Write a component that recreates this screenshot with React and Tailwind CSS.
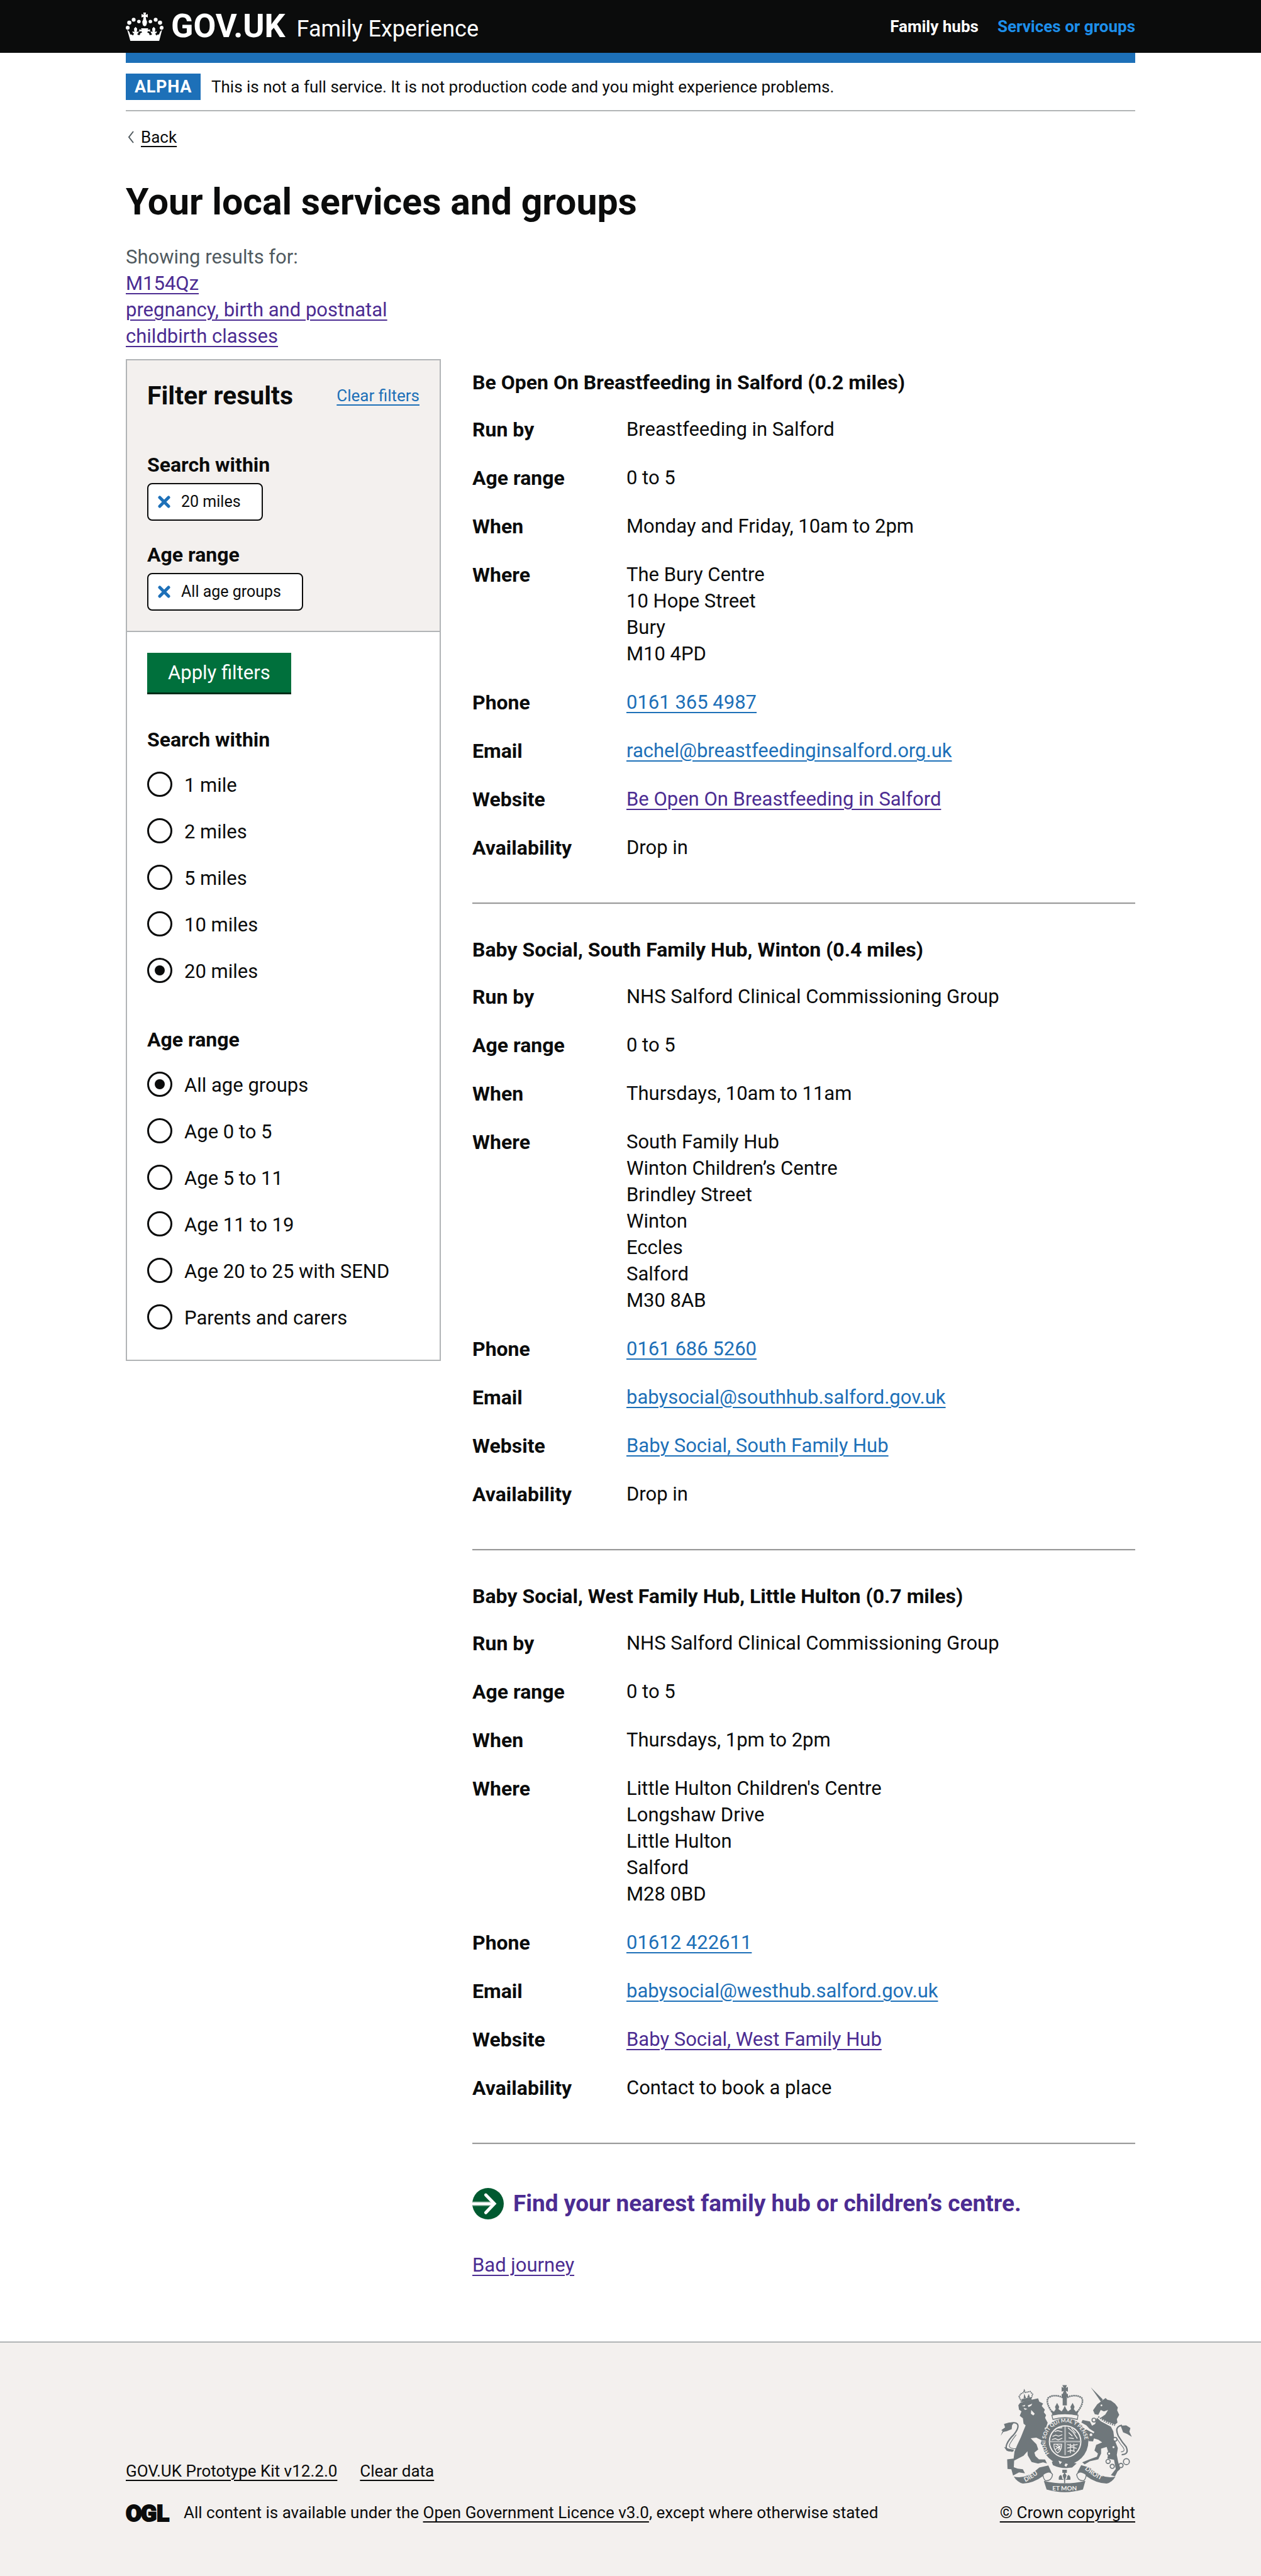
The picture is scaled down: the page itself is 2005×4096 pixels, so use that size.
import { useState } from "react";

const LINK = "text-[#1d70b8] underline decoration-2 underline-offset-[5px]";
const VISITED = "text-[#4c2c92] underline decoration-2 underline-offset-[5px]";
const DARK_LINK = "text-[#0b0c0c] underline decoration-2 underline-offset-[5px]";

const services = [
  {
    title: "Be Open On Breastfeeding in Salford (0.2 miles)",
    runBy: "Breastfeeding in Salford",
    age: "0 to 5",
    when: "Monday and Friday, 10am to 2pm",
    where: ["The Bury Centre", "10 Hope Street", "Bury", "M10 4PD"],
    phone: "0161 365 4987",
    email: "rachel@breastfeedinginsalford.org.uk",
    website: "Be Open On Breastfeeding in Salford",
    visited: true,
    availability: "Drop in",
  },
  {
    title: "Baby Social, South Family Hub, Winton (0.4 miles)",
    runBy: "NHS Salford Clinical Commissioning Group",
    age: "0 to 5",
    when: "Thursdays, 10am to 11am",
    where: [
      "South Family Hub",
      "Winton Children’s Centre",
      "Brindley Street",
      "Winton",
      "Eccles",
      "Salford",
      "M30 8AB",
    ],
    phone: "0161 686 5260",
    email: "babysocial@southhub.salford.gov.uk",
    website: "Baby Social, South Family Hub",
    visited: false,
    availability: "Drop in",
  },
  {
    title: "Baby Social, West Family Hub, Little Hulton (0.7 miles)",
    runBy: "NHS Salford Clinical Commissioning Group",
    age: "0 to 5",
    when: "Thursdays, 1pm to 2pm",
    where: ["Little Hulton Children's Centre", "Longshaw Drive", "Little Hulton", "Salford", "M28 0BD"],
    phone: "01612 422611",
    email: "babysocial@westhub.salford.gov.uk",
    website: "Baby Social, West Family Hub",
    visited: true,
    availability: "Contact to book a place",
  },
];

const distances = ["1 mile", "2 miles", "5 miles", "10 miles", "20 miles"];
const ages = [
  "All age groups",
  "Age 0 to 5",
  "Age 5 to 11",
  "Age 11 to 19",
  "Age 20 to 25 with SEND",
  "Parents and carers",
];

function Crown() {
  return (
    <svg viewBox="12 30 216 162" className="h-[45px] w-[60px]" fill="#fff" aria-hidden="true">
      <circle cx="23" cy="117" r="11" />
      <circle cx="32" cy="88" r="12" />
      <circle cx="57" cy="71" r="11" />
      <circle cx="87" cy="81" r="10" />
      <circle cx="217" cy="117" r="11" />
      <circle cx="208" cy="88" r="12" />
      <circle cx="183" cy="71" r="11" />
      <circle cx="153" cy="81" r="10" />
      <path d="M112 30h16l-3 13q8-2 13-5v20q-6-3-12-4l3 18q6 6 4 18l-4 14q-9 8-18 0l-4-14q-2-12 4-18l3-18q-6 1-12 4V38q5 3 13 5z" />
      <path d="M20 128q8 6 12 12l6 16q4-2 10 1l4 4 8-10q-12-4-9-14l10 5-2-20 9-10 9 10-2 20 10-5q2 11-8 15 6 10 16 6-2-12 12-14-4-8-4-8l-12 4v-14l14 2-4-8h42l-4 8 14-2v14l-12-4-4 8q14 2 12 14 10 4 16-6-10-4-8-15l10 5-2-20 9-10 9 10-2 20 10-5q3 10-9 14l8 10 4-4q6-3 10-1l6-16q4-6 12-12l-12 46-5 18H38l-5-18z" />
    </svg>
  );
}

function ArrowIcon() {
  return (
    <svg viewBox="30 17 180 180" className="size-[50px] shrink-0" aria-hidden="true">
      <circle cx="120" cy="107" r="90" fill="#005a30" />
      <path d="M31 95H140V120H31Z" fill="#9dbcac" />
      <path d="M30 101H150V114H30Z" fill="#fff" />
      <path d="M107 57L156 107L107 158" fill="none" stroke="#fff" strokeWidth="18" strokeLinecap="round" />
    </svg>
  );
}

function OglLogo() {
  return (
    <svg viewBox="0 0 69 28" className="mt-[3px] h-[28px] w-[69px] shrink-0 overflow-visible" role="img" aria-label="OGL">
      <text
        x="0 24 49"
        y="27"
        fontFamily="Roboto, sans-serif"
        fontWeight="900"
        fontSize="37"
        fill="#0b0c0c"
        stroke="#0b0c0c"
        strokeWidth="2"
      >
        OGL
      </text>
    </svg>
  );
}

function Supporters() {
  return (
    <g>
      {/* lion */}
      <path d="M232 235L242 222L270 212L345 195L352 214L374 225L366 240L384 260L378 275L391 292L385 307L400 335L392 360L382 366L396 402L404 440L398 472L375 470L360 455L366 436L335 421L303 424L318 440L336 458L346 488L324 506L330 526L350 545L385 546L396 568L374 562L345 569L308 560L286 522L282 470L288 494L262 524L208 552L206 590L228 598L258 602L270 625L236 620L202 638L192 602L170 600L168 545L205 540L210 500L226 462L246 420L260 385L274 350L262 340L258 310L240 295L250 270L236 260Z" />
      <path d="M204 496Q150 500 166 458Q178 430 205 405Q240 362 226 342Q212 328 178 342" fill="none" stroke="#6f777b" strokeWidth="8" />
      <path d="M218 484Q166 484 186 452Q200 428 220 404" fill="none" stroke="#6f777b" strokeWidth="4" />
      <path d="M131 410L142 382L134 378L156 362L150 342L178 334L208 332L196 350L194 372L166 384L146 388Z" />
      <path d="M150 474L176 484L208 490L198 502L166 496Z" />
      <path d="M250 214L236 186L246 170L262 162L266 150L272 162L300 156L314 172L304 202Z" fill="none" stroke="#6f777b" strokeWidth="7" strokeDasharray="7 3" />
      <path d="M250 200L308 188L306 204L252 216ZM262 196L266 168L276 194ZM282 192L292 170L298 190Z" />
      <g fill="#f3f0ee">
        <path d="M252 240L272 232L268 242ZM286 236L312 226L306 238L290 246ZM306 262L326 284L318 294L304 284ZM262 250L284 256L270 262Z" />
      </g>
      {/* unicorn */}
      <path d="M647 132L716 202L706 216Z" />
      <path d="M712 208L732 194L742 204L762 208L786 226L802 248L798 264L810 290L796 314L800 334L786 346L742 330L702 308L730 288L746 262L722 270L704 262L690 290L670 286L660 264L684 230Z" />
      <path d="M682 306L706 328L762 358L776 385L782 430L802 480L796 520L804 560L816 600L800 614L786 642L762 636L790 600L780 548L742 540L748 506L738 474L706 484L706 512L690 545L642 556L612 574L598 562L640 545L682 530L688 512L668 494L678 462L712 448L690 432L665 425L660 442L634 440L624 405L605 385L622 374L662 396L668 388L640 370L622 350L593 334L600 320L642 328L654 352L672 342Z" />
      <path d="M690 300Q730 336 786 350" fill="none" stroke="#6f777b" strokeWidth="8" strokeDasharray="7 6" />
      <path d="M824 518Q868 516 850 474Q824 444 804 410Q780 356 826 350" fill="none" stroke="#6f777b" strokeWidth="8" />
      <path d="M820 502Q848 500 832 476Q812 452 796 424" fill="none" stroke="#6f777b" strokeWidth="4" />
      <path d="M818 352L850 350L874 366L868 386L882 416L856 400L832 390Z" />
      <g fill="#f3f0ee" stroke="#6f777b" strokeWidth="6">
        <circle cx="665" cy="320" r="11" />
        <circle cx="648" cy="404" r="11" />
        <circle cx="786" cy="430" r="11" />
        <circle cx="777" cy="475" r="9" />
        <circle cx="752" cy="512" r="9" />
        <circle cx="746" cy="557" r="12" />
        <circle cx="770" cy="585" r="12" />
        <circle cx="820" cy="580" r="12" />
        <circle cx="851" cy="558" r="17" />
      </g>
      <circle cx="708" cy="236" r="5" fill="#f3f0ee" />
    </g>
  );
}

function CoatOfArms() {
  return (
    <svg viewBox="131 118 752 616" className="h-[171px] w-[209px]" fill="#6f777b" aria-hidden="true">
      <defs>
        <path id="garter" d="M420 523A112 112 0 1 1 582 521" />
        <path id="left-scroll" d="M272 674Q325 650 376 602" />
        <path id="right-scroll" d="M612 602Q660 646 738 678" />
      </defs>
      <Supporters />
      {/* crown */}
      <path d="M484 120H510L504 136L516 130V158L504 152L510 170H516V186H480V170H486L492 152L480 158V130L492 136Z" />
      <path d="M486 186H510V236H486Z" />
      <path d="M432 284Q384 220 404 192Q440 168 488 192M562 284Q614 220 594 192Q556 168 508 192" fill="none" stroke="#6f777b" strokeWidth="9" strokeDasharray="9 3" />
      <path d="M420 262L436 272L446 258L442 244L454 222L466 244L462 258L480 270L490 256L498 238L506 256L516 270L534 258L530 244L543 222L554 244L550 258L562 272L576 262L570 292Q498 276 428 292Z" />
      <path d="M424 292Q498 276 574 292L570 316Q498 296 430 316Z" fill="none" stroke="#6f777b" strokeWidth="5" />
      {/* garter and shield */}
      <circle cx="500" cy="443" r="133" />
      <circle cx="500" cy="443" r="90" fill="none" stroke="#f3f0ee" strokeWidth="7" />
      <text fill="#f3f0ee" fontFamily="Lato, sans-serif" fontWeight="700" fontSize="30">
        <textPath href="#garter" xlinkHref="#garter" startOffset="3%">HONI SOIT QUI MAL Y PENSE</textPath>
      </text>
      <g stroke="#f3f0ee" fill="none" strokeWidth="5">
        <path d="M428 414L446 406L462 412L484 404M424 432L444 426L460 434L484 424M440 386L458 380L484 388M452 366L484 364" />
        <path d="M516 364L546 390L570 426M520 392L542 412M536 366L560 396M520 422L550 426" />
        <path d="M512 460L538 466L572 460M512 480L540 474L566 482M514 500L536 494L556 500M530 456V510M550 456V500" />
        <path d="M436 458L480 458Q480 496 456 508Q434 490 436 458ZM444 468L474 488M474 466L444 488M452 460L472 476M458 494L470 480" />
        <path d="M416 443H584M500 356V520" strokeWidth="7" />
      </g>
      <path d="M418 443H582M500 358V520" stroke="#a6abad" strokeWidth="6" />
      <path d="M424 560L452 540L470 548L566 568L540 592Q480 602 430 578Z" />
      <path d="M462 552L482 560L470 574ZM502 568L516 572L506 588L496 580Z" fill="#f3f0ee" />
      <path d="M484 604H510V622H484ZM497 618L508 638L500 662H530Q534 640 518 634Q508 644 512 654L500 664V682H494V664L482 654Q486 644 476 634Q460 640 464 662H494L486 638Z" />
      {/* scrolls */}
      <path d="M206 644Q280 662 352 592L404 580L422 620L374 640Q320 680 258 684Q226 676 206 644Z" />
      <path d="M788 644Q714 662 640 592L592 578L570 620L620 640Q674 680 738 684Q770 676 788 644Z" />
      <path d="M374 632Q412 604 428 632Q424 668 388 668Q372 652 374 632Z" fill="#f3f0ee" stroke="#6f777b" strokeWidth="5" />
      <path d="M620 632Q582 604 566 632Q570 668 606 668Q622 652 620 632Z" fill="#f3f0ee" stroke="#6f777b" strokeWidth="5" />
      <path d="M378 668Q497 696 616 668L602 718Q497 748 394 718Z" />
      <g fill="#f3f0ee" fontFamily="Lato, sans-serif" fontWeight="700" fontSize="36">
        <text><textPath href="#left-scroll" xlinkHref="#left-scroll">DIEU</textPath></text>
        <text><textPath href="#right-scroll" xlinkHref="#right-scroll">DROIT</textPath></text>
        <text x="497" y="722" textAnchor="middle">ET MON</text>
      </g>
    </svg>
  );
}

function Chip({ children }) {
  return (
    <button
      type="button"
      className="flex h-[60px] items-center gap-[17px] rounded-[8px] border-2 border-[#0b0c0c] bg-white pl-[15px] pr-[33px] text-[25px] leading-[32px]"
    >
      <svg viewBox="0 0 20 20" className="size-[20px]" aria-hidden="true">
        <path d="M3 3L17 17M17 3L3 17" stroke="#1d70b8" strokeWidth="5" strokeLinecap="round" />
      </svg>
      {children}
    </button>
  );
}

function RadioGroup({ legend, name, options, initial }) {
  const [value, setValue] = useState(initial);
  return (
    <fieldset>
      <legend className="text-[32px] leading-[42px] font-bold">{legend}</legend>
      <div className="mt-[30px] flex flex-col gap-[34px]">
        {options.map((option) => (
          <label key={option} className="flex h-[40px] items-center gap-[19px]">
            <input
              type="radio"
              name={name}
              checked={value === option}
              onChange={() => setValue(option)}
              className="grid size-[40px] shrink-0 appearance-none place-content-center rounded-full border-[3px] border-[#0b0c0c] bg-white before:size-[16px] before:rounded-full before:content-[''] checked:before:bg-[#0b0c0c]"
            />
            <span className="pt-[4px]">{option}</span>
          </label>
        ))}
      </div>
    </fieldset>
  );
}

function Row({ term, children }) {
  return (
    <div className="flex">
      <dt className="w-[245px] shrink-0 text-[32px] font-bold">{term}</dt>
      <dd className="min-w-0 flex-1">{children}</dd>
    </div>
  );
}

function Service({ service }) {
  return (
    <article>
      <h2 className="text-[32px] leading-[42px] font-bold">{service.title}</h2>
      <dl className="mt-[33px] flex flex-col gap-[35px]">
        <Row term="Run by">{service.runBy}</Row>
        <Row term="Age range">{service.age}</Row>
        <Row term="When">{service.when}</Row>
        <Row term="Where">
          {service.where.map((line) => (
            <div key={line}>{line}</div>
          ))}
        </Row>
        <Row term="Phone"><a href="#phone" className={LINK}>{service.phone}</a></Row>
        <Row term="Email"><a href="#email" className={LINK}>{service.email}</a></Row>
        <Row term="Website"><a href="#website" className={service.visited ? VISITED : LINK}>{service.website}</a></Row>
        <Row term="Availability">{service.availability}</Row>
      </dl>
      <hr className="mt-[66px] mb-[51px] h-[3px] border-t-2 border-b border-t-[#999] border-b-[#eee]" />
    </article>
  );
}

export default function App() {
  return (
    <div className="bg-white font-[Roboto,sans-serif] text-[31px] leading-[42px] text-[#0b0c0c]">
      <header className="bg-[#0b0c0c] text-white">
        <div className="mx-auto flex h-[84px] max-w-[1605px] items-center justify-between">
          <div className="flex items-center">
            <a href="#home" className="flex items-center gap-[12px] text-[52px] leading-[60px] font-bold">
              <Crown />
              <span>GOV.UK</span>
            </a>
            <a href="#service" className="ml-[18px] pt-[8px] text-[36px] leading-[48px]">Family Experience</a>
          </div>
          <nav className="flex gap-[30px] text-[26px] leading-[34px] font-bold">
            <a href="#hubs">Family hubs</a>
            <a href="#groups" className="text-[#1d8feb]">Services or groups</a>
          </nav>
        </div>
      </header>

      <div className="mx-auto max-w-[1605px]">
        <div className="h-[16px] bg-[#1d70b8]" />
        <div className="flex items-center gap-[17px] border-b-2 border-[#b1b4b6] pt-[17px] pb-[16px] text-[26px] leading-[42px]">
          <strong className="bg-[#1d70b8] px-[14px] text-[27px] tracking-wide text-white">ALPHA</strong>
          <span>This is not a full service. It is not production code and you might experience problems.</span>
        </div>
        <a href="#back" className="mt-[24px] flex items-center gap-[11px] text-[26px] leading-[34px]">
          <svg viewBox="0 0 10 20" className="ml-[3px] h-[20px] w-[10px]" aria-hidden="true">
            <path d="M9 1L2 10L9 19" fill="none" stroke="#505a5f" strokeWidth="2" />
          </svg>
          <span className="underline decoration-2 underline-offset-[5px]">Back</span>
        </a>

        <main className="pb-[100px]">
          <h1 className="mt-[54px] text-[59px] leading-[64px] font-bold">Your local services and groups</h1>
          <div className="mt-[35px] flex flex-col items-start">
            <span className="text-[#505a5f]">Showing results for:</span>
            <a href="#postcode" className={VISITED}>M154Qz</a>
            <a href="#category" className={VISITED}>pregnancy, birth and postnatal</a>
            <a href="#type" className={VISITED}>childbirth classes</a>
          </div>

          <div className="mt-[15px] flex items-start gap-[50px]">
            <form className="w-[501px] shrink-0 border-2 border-[#b1b4b6]">
              <div className="border-b-2 border-[#b1b4b6] bg-[#f3f0ee] px-[32px] pt-[33px] pb-[32px]">
                <div className="flex items-center justify-between">
                  <h2 className="text-[41px] leading-[46px] font-bold">Filter results</h2>
                  <a href="#clear" className="text-[26px] leading-[34px] text-[#1d70b8] underline decoration-2 underline-offset-[5px]">
                    Clear filters
                  </a>
                </div>
                <h3 className="mt-[66px] mb-[8px] text-[32px] leading-[42px] font-bold">Search within</h3>
                <Chip>20 miles</Chip>
                <h3 className="mt-[33px] mb-[8px] text-[32px] leading-[42px] font-bold">Age range</h3>
                <Chip>All age groups</Chip>
              </div>
              <div className="px-[32px] pt-[33px] pb-[48px]">
                <button
                  type="button"
                  className="mb-[51px] block h-[66px] border-b-[3px] border-[#002d18] bg-[#00703c] px-[33px] leading-[62px] text-white"
                >
                  Apply filters
                </button>
                <RadioGroup legend="Search within" name="distance" options={distances} initial="20 miles" />
                <div className="mt-[69px]">
                  <RadioGroup legend="Age range" name="age" options={ages} initial="All age groups" />
                </div>
              </div>
            </form>

            <section className="min-w-0 flex-1 pt-[16px]">
              {services.map((service) => (
                <Service key={service.title} service={service} />
              ))}
              <a
                href="#nearest"
                className="mt-[69px] flex items-center gap-[15px] text-[37px] leading-[50px] font-bold text-[#4c2c92]"
              >
                <ArrowIcon />
                Find your nearest family hub or children’s centre.
              </a>
              <p className="mt-[52px]">
                <a href="#bad-journey" className={VISITED}>Bad journey</a>
              </p>
            </section>
          </div>
        </main>
      </div>

      <footer className="border-t-2 border-[#b1b4b6] bg-[#f3f0ee] pt-[67px] pb-[84px] text-[26px] leading-[33px]">
        <div className="mx-auto flex max-w-[1605px] items-end justify-between">
          <div>
            <div className="flex gap-[36px]">
              <a href="#kit" className={DARK_LINK}>GOV.UK Prototype Kit v12.2.0</a>
              <a href="#clear-data" className={DARK_LINK}>Clear data</a>
            </div>
            <div className="mt-[33px] flex gap-[23px]">
              <OglLogo />
              <span>
                All content is available under the{" "}
                <a href="#licence" className={DARK_LINK}>Open Government Licence v3.0</a>, except where otherwise stated
              </span>
            </div>
          </div>
          <div className="flex flex-col items-end gap-[16px]">
            <div className="pr-[5px]">
              <CoatOfArms />
            </div>
            <a href="#copyright" className={DARK_LINK}>© Crown copyright</a>
          </div>
        </div>
      </footer>
    </div>
  );
}
